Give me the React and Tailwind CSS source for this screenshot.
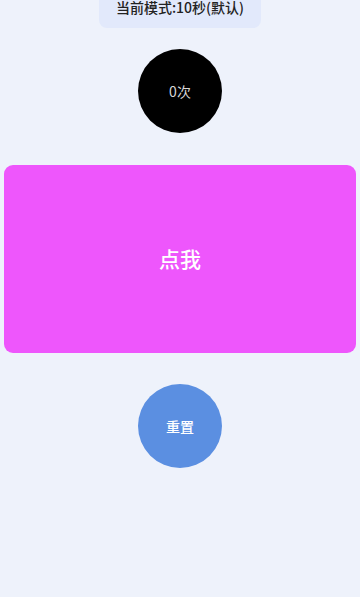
export default function App() {
  return (
    <div
      className="min-h-[597px] w-[360px] bg-[#eef2fb] flex flex-col items-center"
      style={{ fontFamily: '"Noto Sans CJK SC", "Noto Sans", sans-serif' }}
    >
      <div className="w-[162px] h-[28px] rounded-b-lg bg-[#e2e9fb] flex justify-center">
        <span className="text-[14px] leading-[15px] font-medium text-[#222]">当前模式:10秒(默认)</span>
      </div>

      <div className="mt-[21px] w-[84px] h-[84px] rounded-full bg-black flex items-center justify-center">
        <span className="text-[14px] text-[#d8d8d8]">0次</span>
      </div>

      <button className="mt-[32px] w-[352px] h-[188px] rounded-[9px] bg-[#ee56fc] flex items-center justify-center">
        <span className="text-[21px] font-medium text-white">点我</span>
      </button>

      <button className="mt-[31px] w-[84px] h-[84px] rounded-full bg-[#5b8fe1] flex items-center justify-center">
        <span className="text-[14px] font-medium text-white">重置</span>
      </button>
    </div>
  );
}
